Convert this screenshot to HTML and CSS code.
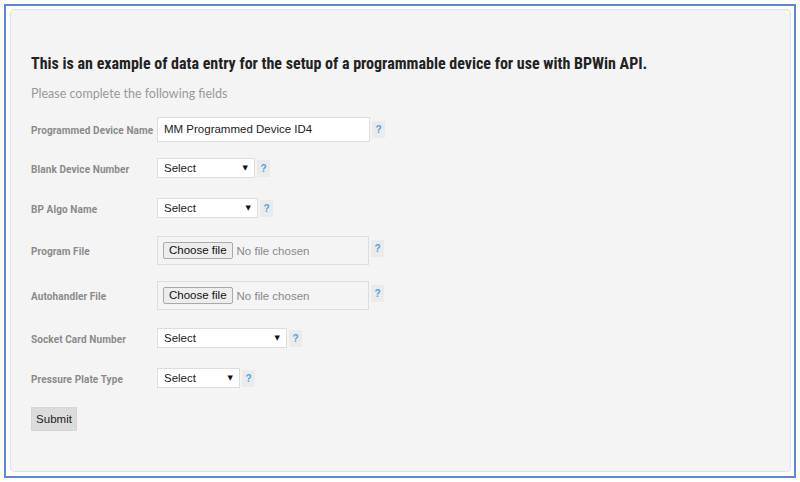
FILE: index.html
```html
<!DOCTYPE html>
<html lang="en">
<head>
    <meta charset="UTF-8">
    <title>BPWin API device setup</title>
    <link rel="stylesheet" href="styles.css">
</head>
<body>
    <div id="frame">
        <div id="panel">
            <h1>This is an example of data entry for the setup of a programmable device for use with BPWin API.</h1>
            <p class="subtitle">Please complete the following fields</p>
            <form id="device-form">
                <div class="row">
                    <label class="field-label" for="device-name">Programmed Device Name</label>
                    <input type="text" id="device-name" class="text-input" value="MM Programmed Device ID4">
                    <span class="help">?</span>
                </div>
                <div class="row">
                    <label class="field-label">Blank Device Number</label>
                    <span class="select-wrap" style="width: 98px"><select><option>Select</option></select></span>
                    <span class="help">?</span>
                </div>
                <div class="row">
                    <label class="field-label">BP Algo Name</label>
                    <span class="select-wrap" style="width: 101px"><select><option>Select</option></select></span>
                    <span class="help">?</span>
                </div>
                <div class="row row-file">
                    <label class="field-label">Program File</label>
                    <div class="file-box">
                        <label class="file-btn">Choose file<input type="file"></label>
                        <span class="file-name">No file chosen</span>
                    </div>
                    <span class="help help-top">?</span>
                </div>
                <div class="row row-file">
                    <label class="field-label">Autohandler File</label>
                    <div class="file-box">
                        <label class="file-btn">Choose file<input type="file"></label>
                        <span class="file-name">No file chosen</span>
                    </div>
                    <span class="help help-top">?</span>
                </div>
                <div class="row">
                    <label class="field-label">Socket Card Number</label>
                    <span class="select-wrap" style="width: 130px"><select><option>Select</option></select></span>
                    <span class="help">?</span>
                </div>
                <div class="row">
                    <label class="field-label">Pressure Plate Type</label>
                    <span class="select-wrap" style="width: 83px"><select><option>Select</option></select></span>
                    <span class="help">?</span>
                </div>
                <button type="button" class="submit">Submit</button>
            </form>
        </div>
    </div>
</body>
</html>
```

FILE: styles.css
```css
body {
    margin: 0;
    padding: 4px;
    background-color: #fff;
    font-family: Lato, sans-serif;
}
#frame {
    height: 474px;
    box-sizing: border-box;
    border: 2px solid #5b8ad4;
    padding: 3px 3px 4px 4px;
}
#panel {
    height: 100%;
    box-sizing: border-box;
    background-color: #f4f4f4;
    border: 1px solid #e2e2e2;
    border-radius: 4px;
    padding: 43px 20px 0 20px;
}
#panel h1 {
    margin: 0;
    font-family: "Roboto Condensed", "Open Sans", sans-serif;
    font-size: 16px;
    font-weight: bold;
    line-height: 22px;
    color: #222;
}
.subtitle {
    margin: 10px 0 0 0;
    font-size: 12.5px;
    line-height: 18px;
    color: #999;
}
#device-form {
    margin-top: 7px;
}
.row {
    display: flex;
    align-items: center;
    height: 40px;
}
.row:first-child {
    height: 38px;
}
.row-file {
    height: 45px;
}
.field-label {
    width: 126px;
    flex-shrink: 0;
    padding-top: 2px;
    font-family: Roboto, sans-serif;
    font-size: 10px;
    font-weight: bold;
    letter-spacing: 0.1px;
    color: #8a8a8a;
    white-space: nowrap;
}
.text-input {
    width: 213px;
    height: 25px;
    box-sizing: border-box;
    padding: 0 6px;
    border: 1px solid #ddd;
    background-color: #fff;
    font-family: "Liberation Sans", Arial, sans-serif;
    font-size: 11.5px;
    color: #222;
    outline: none;
}
.select-wrap {
    position: relative;
    display: block;
    height: 20px;
}
.select-wrap select {
    display: block;
    appearance: none;
    width: 100%;
    height: 20px;
    box-sizing: border-box;
    padding: 0 6px;
    border: 1px solid #ddd;
    border-radius: 0;
    background-color: #fff;
    font-family: "Liberation Sans", Arial, sans-serif;
    font-size: 11.5px;
    color: #222;
    outline: none;
}
.select-wrap::after {
    content: "\25BC";
    position: absolute;
    right: 7px;
    top: 5px;
    font-family: "DejaVu Sans", sans-serif;
    font-size: 7px;
    line-height: 10px;
    color: #111;
    pointer-events: none;
}
.help {
    width: 13px;
    height: 17px;
    margin-left: 2px;
    background-color: #ebebeb;
    color: #4f9fe6;
    font-family: "Liberation Sans", Arial, sans-serif;
    font-size: 10px;
    font-weight: bold;
    line-height: 17px;
    text-align: center;
}
.help-top {
    align-self: flex-start;
    margin-top: 12px;
}
.file-box {
    display: flex;
    align-items: center;
    width: 212px;
    height: 29px;
    box-sizing: border-box;
    padding: 0 5px;
    border: 1px solid #ddd;
}
.file-btn {
    height: 17px;
    box-sizing: border-box;
    padding: 0 5px;
    border: 1px solid #a9a9a9;
    border-radius: 2px;
    background-color: #ededed;
    font-family: "Liberation Sans", Arial, sans-serif;
    font-size: 11.5px;
    line-height: 15px;
    color: #111;
}
.file-btn input {
    display: none;
}
.file-name {
    margin-left: 4px;
    font-family: "Liberation Sans", Arial, sans-serif;
    font-size: 11.5px;
    color: #888;
}
.submit {
    display: block;
    margin-top: 9px;
    width: 46px;
    height: 24px;
    padding: 0;
    border: 1px solid #d6d6d6;
    background-color: #dcdcdc;
    font-family: "Liberation Sans", Arial, sans-serif;
    font-size: 11.5px;
    color: #222;
}
```
